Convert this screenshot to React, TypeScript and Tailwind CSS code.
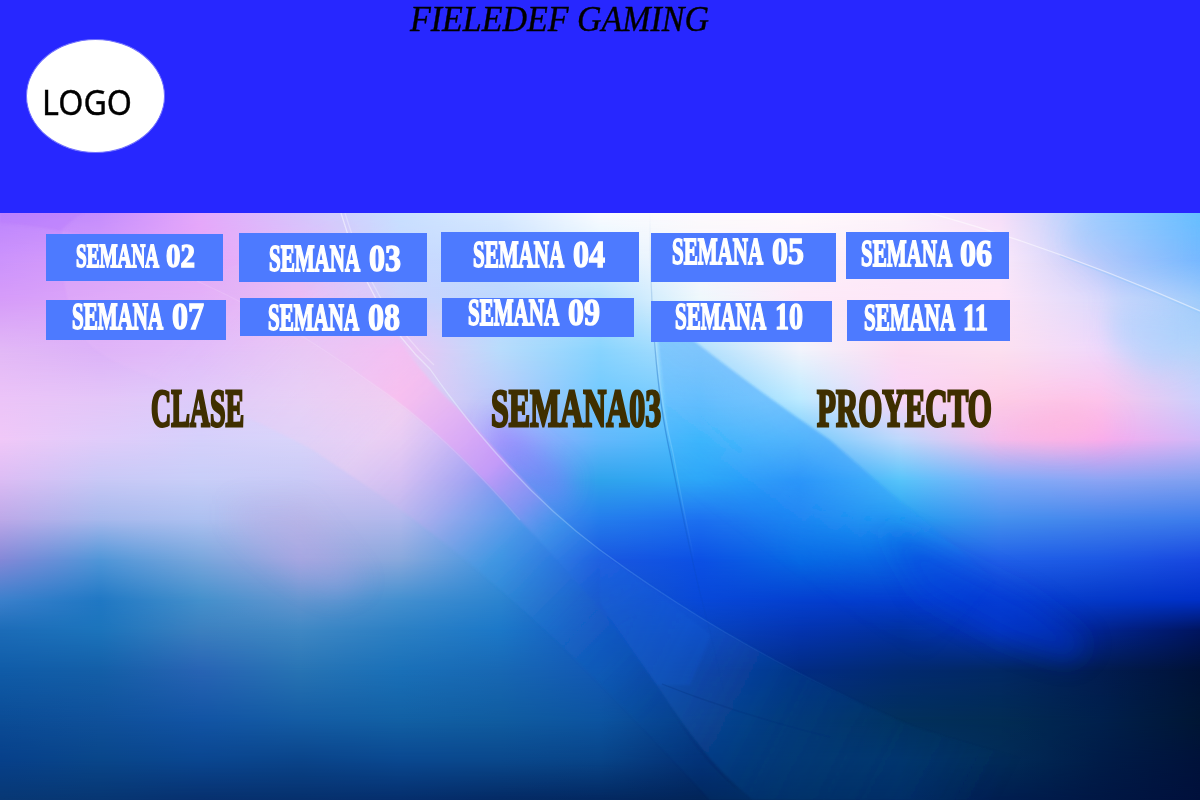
import { useLayoutEffect, useRef, useState } from "react";

// Text squeezed or stretched horizontally so that it fills a given width.
function FitText({ text, width, className }: { text: string; width: number; className: string }) {
  const ref = useRef<HTMLSpanElement>(null);
  const [scale, setScale] = useState(0.6);
  useLayoutEffect(() => {
    if (ref.current) setScale(width / ref.current.offsetWidth);
  }, [text, width]);
  return (
    <span
      ref={ref}
      className={`inline-block origin-left leading-none whitespace-nowrap ${className}`}
      style={{ transform: `scaleX(${scale})` }}
    >
      {text}
    </span>
  );
}

const display = "font-['Liberation_Serif',serif] font-bold";

const weeks = [
  [
    { word: "SEMANA", number: "02", wordWidth: "w-[90px]", fit: [83, 29], box: "ml-[46px] mt-[2px] w-[177px] h-[47px] pl-[30px] pt-[5px]", size: "text-[34px]" },
    { word: "SEMANA", number: "03", wordWidth: "w-[99.5px]", fit: [91, 32], box: "ml-[16px] mt-[1px] w-[188px] h-[49px] pl-[30px] pt-[7px]", size: "text-[37px]" },
    { word: "SEMANA", number: "04", wordWidth: "w-[99.5px]", fit: [91, 32], box: "ml-[14px] w-[198px] h-[50px] pl-[32px] pt-[4px]", size: "text-[37px]" },
    { word: "SEMANA", number: "05", wordWidth: "w-[99.5px]", fit: [91, 32], box: "ml-[12px] mt-[1px] w-[184.5px] h-[49px] pl-[21px]", size: "text-[37px]" },
    { word: "SEMANA", number: "06", wordWidth: "w-[99.5px]", fit: [91, 32], box: "ml-[10px] w-[163.5px] h-[47px] pl-[15px] pt-[3px]", size: "text-[37px]" },
  ],
  [
    { word: "SEMANA", number: "07", wordWidth: "w-[99.5px]", fit: [91, 32], box: "ml-[46px] mt-[2px] w-[180px] h-[40px] pl-[26px]", size: "text-[37px] -mt-[2px]" },
    { word: "SEMANA", number: "08", wordWidth: "w-[99.5px]", fit: [91, 32], box: "ml-[14px] w-[187px] h-[38px] pl-[28px]", size: "text-[37px] mt-[1px]" },
    { word: "SEMANA", number: "09", wordWidth: "w-[99.5px]", fit: [91, 32], box: "ml-[15px] w-[192px] h-[39px] pl-[26px]", size: "text-[37px] -mt-[4px]" },
    { word: "SEMANA", number: "10", wordWidth: "w-[99.5px]", fit: [91, 28], box: "ml-[17px] mt-[3px] w-[181px] h-[41px] pl-[24px]", size: "text-[37px] -mt-[3px]" },
    { word: "SEMANA", number: "11", wordWidth: "w-[99px]", fit: [91, 25], box: "ml-[14.5px] mt-[2px] w-[163.5px] h-[41px] pl-[17px]", size: "text-[37px] -mt-[1px]" },
  ],
];

// Colour mesh: one entry per row, thirteen colours at 100px steps.
const mesh: [number, string][] = [
  [0, "bd85fd c58dfd e5a8fb d6c4fc c9e0ff d8eaff fafcff fdfafd fffafc fdf3fb f6def9 a4d0ff 66c0ff"],
  [47, "cc93fc d69efa e6a6f8 e4bcfa c8d8ff c4dcff dcf2ff f8f6fc fdf0fa fce9f8 fbe8fa c4ccfb 78b8ff"],
  [87, "d69cf9 dca6f9 e0aef8 ecbcf4 ccd2fc bcd8ff b4e0fe eef8fc fdeaf8 fde6f7 fde4f7 dcdafc a0ccfb"],
  [137, "e2b8f6 dcb2f8 dfbbfa e6c8f6 f0c4f4 b8dcfc 88d4fe b0e0fd f2f4fc fcdcf2 fce0f0 f0d8fb b8d4fa"],
  [187, "ecc4f8 e4c6f8 dcccfa e3d3f8 eecef2 b8c8fa 70c8fe 78ccfe bceaff f8d4f8 fdcce6 fdc4ec ccd0fc"],
  [227, "f0c8f8 e0ccfa d5d0fb d8d4fa e6cef6 a8a4fc 64b8fc 48bcfc 70c8fc bcd8fc f4bcec f8acee d0b8f8"],
  [267, "dcbcf4 c8c8f6 c8cef8 c9caf6 d4c2f4 7c94f4 30a4ec 30a8f8 3098f8 58c4fa 80acf8 8ca4f4 80a0f0"],
  [307, "bca8e8 a6b8ec acc0f0 b8b8e8 b0b8ec 649cec 247cec 1c70f0 2084f0 209cf0 4490ee 4484ec 3c7cec"],
  [347, "8488d8 5096d8 78a6dc a0a6e0 88a8dc 4094e0 1a58e0 0c50e4 0868e4 0c60e0 2060e8 1c58e4 1848e0"],
  [387, "3c80cc 2078c4 4490cc 6496d0 4490d0 2c84d0 1858c8 0848d8 0440d0 0438cc 0840d0 0438c8 0030c8"],
  [417, "1c6cb8 1c74bc 3c80c0 4088c4 2c80c4 1c78c8 1458c0 0844c0 0434b0 0230a0 0434b8 022490 001560"],
  [457, "105ca8 145fa8 2864b4 2874b4 1a70b8 1868b4 1258b4 083ca0 022c84 022a70 022864 021c50 001238"],
  [507, "0b4c96 0f509a 1254a4 145ca4 1260a4 105ca0 0c54a0 063c88 043470 02305c 022c54 00204c 001634"],
  [547, "07408a 09468a 0a4690 0a448a 0a4890 0a488c 084488 043074 04346c 02346c 022c58 001c48 00123a"],
  [587, "083874 073672 07306e 06306c 052e6c 042a64 032860 022458 022c60 022c64 001e50 001744 00103c"],
];

function Background() {
  return (
    <svg viewBox="0 0 1200 587" className="col-start-1 row-start-1 block h-[587px] w-[1200px]">
      <defs>
        {mesh.map(([, colours], i) => (
          <linearGradient key={i} id={`row${i}`} gradientUnits="userSpaceOnUse" x1="0" x2="1200" y1="0" y2="0">
            {colours.split(" ").map((c, j) => (
              <stop key={j} offset={j / 12} stopColor={`#${c}`} />
            ))}
          </linearGradient>
        ))}
        {mesh.slice(1).map(([y], i) => (
          <g key={i}>
            <linearGradient id={`fade${i + 1}`} gradientUnits="userSpaceOnUse" x1="0" x2="0" y1={mesh[i][0]} y2={y}>
              <stop offset="0" stopColor="#fff" stopOpacity="0" />
              <stop offset="1" stopColor="#fff" />
            </linearGradient>
            <mask id={`mask${i + 1}`} maskUnits="userSpaceOnUse" x="0" y={mesh[i][0]} width="1200" height="587">
              <rect x="0" y={mesh[i][0]} width="1200" height="587" fill={`url(#fade${i + 1})`} />
            </mask>
          </g>
        ))}
        <linearGradient id="violet" gradientUnits="userSpaceOnUse" x1="330" y1="60" x2="640" y2="400">
          <stop offset="0" stopColor="#e8c8fc" stopOpacity=".1" />
          <stop offset=".3" stopColor="#fcb8ee" stopOpacity=".65" />
          <stop offset=".55" stopColor="#d49cf8" stopOpacity=".75" />
          <stop offset=".66" stopColor="#9494f4" stopOpacity=".6" />
          <stop offset=".74" stopColor="#44a0ec" stopOpacity=".4" />
          <stop offset=".88" stopColor="#2068e0" stopOpacity=".35" />
          <stop offset="1" stopColor="#1058d8" stopOpacity=".2" />
        </linearGradient>
        <linearGradient id="petal" gradientUnits="userSpaceOnUse" x1="200" y1="100" x2="640" y2="530">
          <stop offset="0" stopColor="#f0c4f8" stopOpacity=".15" />
          <stop offset=".35" stopColor="#f4d0f0" stopOpacity=".4" />
          <stop offset=".5" stopColor="#b8a8f0" stopOpacity=".35" />
          <stop offset=".62" stopColor="#409ce8" stopOpacity=".35" />
          <stop offset=".8" stopColor="#1c6cd8" stopOpacity=".2" />
          <stop offset="1" stopColor="#0c4ca8" stopOpacity=".1" />
        </linearGradient>
        <linearGradient id="cyan" gradientUnits="userSpaceOnUse" x1="880" y1="271" x2="805" y2="371">
          <stop offset="0" stopColor="#1c90fc" stopOpacity=".42" />
          <stop offset="1" stopColor="#1c90fc" stopOpacity="0" />
        </linearGradient>
        <linearGradient id="along" gradientUnits="userSpaceOnUse" x1="700" y1="130" x2="1040" y2="385">
          <stop offset="0" stopColor="#fff" stopOpacity=".8" />
          <stop offset=".4" stopColor="#fff" />
          <stop offset=".9" stopColor="#fff" stopOpacity="0" />
        </linearGradient>
        <mask id="alongMask" maskUnits="userSpaceOnUse" x="0" y="0" width="1200" height="587">
          <rect width="1200" height="587" fill="url(#along)" />
        </mask>
        <linearGradient id="wave" gradientUnits="userSpaceOnUse" x1="600" y1="330" x2="1020" y2="550">
          <stop offset="0" stopColor="#2c7cf0" stopOpacity=".05" />
          <stop offset=".25" stopColor="#2c74e0" stopOpacity=".22" />
          <stop offset=".5" stopColor="#044890" stopOpacity=".35" />
          <stop offset="1" stopColor="#043c6c" stopOpacity="0" />
        </linearGradient>
        <linearGradient id="streak" gradientUnits="userSpaceOnUse" x1="400" y1="80" x2="860" y2="500">
          <stop offset="0" stopColor="#fff" stopOpacity=".5" />
          <stop offset=".35" stopColor="#d8f4ff" stopOpacity=".4" />
          <stop offset=".6" stopColor="#88c8ff" stopOpacity=".2" />
          <stop offset="1" stopColor="#58a8f0" stopOpacity="0" />
        </linearGradient>
        <linearGradient id="spine" gradientUnits="userSpaceOnUse" x1="0" y1="0" x2="0" y2="480">
          <stop offset="0" stopColor="#0858b8" stopOpacity="0" />
          <stop offset=".4" stopColor="#0858b8" stopOpacity=".4" />
          <stop offset="1" stopColor="#0838a0" stopOpacity="0" />
        </linearGradient>
        <linearGradient id="spineLight" gradientUnits="userSpaceOnUse" x1="0" y1="0" x2="0" y2="350">
          <stop offset="0" stopColor="#fff" stopOpacity=".05" />
          <stop offset=".6" stopColor="#a0e0ff" stopOpacity=".35" />
          <stop offset="1" stopColor="#a0e0ff" stopOpacity="0" />
        </linearGradient>
        <filter id="soft" x="-20%" y="-20%" width="140%" height="140%">
          <feGaussianBlur stdDeviation="12" />
        </filter>
        <filter id="edge" x="-5%" y="-5%" width="110%" height="110%">
          <feGaussianBlur stdDeviation=".9" />
        </filter>
      </defs>

      {mesh.map(([y], i) => {
        const top = i === 0 ? 0 : mesh[i - 1][0];
        const bottom = i === mesh.length - 1 ? 587 : mesh[i + 1][0];
        return (
          <rect
            key={y}
            x="0"
            y={top}
            width="1200"
            height={bottom - top}
            fill={`url(#row${i})`}
            mask={i === 0 ? undefined : `url(#mask${i})`}
          />
        );
      })}

      <g filter="url(#soft)">
        <path d="M490 195 L572 264 L560 292 L500 250Z" fill="#8870fc" opacity=".38" />
        <path d="M880 310 L1030 385 L1090 430 L1070 450 L1010 430 L920 380Z" fill="#0438dc" opacity=".42" />
        <path d="M235 290 L300 290 L365 370 L335 385 Q280 360 235 310Z" fill="#b4a8e8" opacity=".25" />
        <path d="M1080 0 L1200 0 L1200 60 L1120 80 L1060 30Z" fill="#68b8ff" opacity=".2" />
        <path d="M1110 90 L1200 100 L1200 140 L1150 160 L1110 130Z" fill="#9cd0ff" opacity=".4" />
        <path d="M1000 212 Q1060 250 1115 212 L1070 190Z" fill="#ffb8d8" opacity=".5" />
      </g>

      <g filter="url(#edge)">
        <path d="M0 10 Q38 12 78 22 L62 17 Q74 4 84 0 L0 0Z" fill="#b070ff" opacity=".25" />
        <path
          d="M62 17 Q58 80 82 120 Q90 143 160 167 Q250 203 313 237 L383 284 Q463 340 555 426 Q650 520 710 587 L753 587 Q700 555 657 472 Q600 390 520 307 Q440 215 367 167 Q290 110 197 68 Q120 30 62 17Z"
          fill="url(#petal)"
        />
        <path
          d="M345 0 L370 70 Q400 145 463 200 Q540 290 600 338 L711 422 L690 472 L657 472 Q600 390 520 307 Q440 215 367 167 Q290 110 197 68 Q270 40 345 0Z"
          fill="url(#violet)"
        />
        <g mask="url(#alongMask)">
          <path d="M657 120 L684 120 Q760 180 830 227 L887 277 L956 334 L1060 424 L1060 480 L720 472 L700 380 L670 233Z" fill="url(#cyan)" />
        </g>
        <path d="M600 338 Q750 445 914 514 Q1040 555 1200 580 L1200 587 L753 587 Q710 555 657 472 L600 390Z" fill="url(#wave)" />
      </g>

      <g fill="none" strokeWidth="1.3">
        <path d="M341 0 Q370 100 430 156 Q510 270 600 337 Q740 440 914 514" stroke="url(#streak)" />
        <path d="M345 0 Q374 98 434 152" stroke="#fff" opacity=".3" />
        <path d="M652 0 Q650 150 673 240 Q689 328 702 378" stroke="url(#spineLight)" />
        <path d="M650 0 Q650 150 670 240 Q688 330 700 380 Q716 440 726 490" stroke="url(#spine)" />
        <path d="M930 0 Q1060 36 1200 98" stroke="#fff" opacity=".5" />
        <path d="M1060 43 Q1130 69 1200 100" stroke="#8cc8ff" opacity=".35" />
        <path d="M197 68 Q290 110 367 167 Q440 215 520 307" stroke="#fff" opacity=".12" />
        <path d="M662 471 Q740 502 830 524" stroke="#022c78" opacity=".25" />
      </g>
    </svg>
  );
}

export default function App() {
  return (
    <div className="h-[800px] w-[1200px] overflow-hidden">
      <header className="flex h-[213px] items-start bg-[#2727ff]">
        <div className="mt-[39px] ml-[26px] flex h-[114px] w-[139px] items-start rounded-[50%] border border-[#7070ff] bg-white pt-[45px] pl-[15px]">
          <FitText text="LOGO" width={90} className="font-['Noto_Sans',sans-serif] text-[34px] text-black [-webkit-text-stroke:0.4px_black]" />
        </div>
        <h1 className="mt-[1px] ml-[245px] flex">
          <FitText
            text="FIELEDEF GAMING"
            width={299}
            className="font-['Liberation_Serif',serif] text-[36px] text-black italic [-webkit-text-stroke:0.4px_black]"
          />
        </h1>
      </header>
      <main className="grid grid-cols-1 grid-rows-1">
        <Background />
        <div className="relative col-start-1 row-start-1 h-[587px] w-[1200px] pt-[19px]">
          {weeks.map((row, i) => (
            <nav key={i} className={i === 0 ? "flex h-[66px] items-start" : "flex h-[88px] items-start"}>
              {row.map((w) => (
                <a key={w.number} className={`flex shrink-0 items-start bg-[#4d7aff] ${w.box}`}>
                  <span className={`flex shrink-0 ${w.wordWidth}`}>
                    <FitText
                      text={w.word}
                      width={w.fit[0]}
                      className={`${display} ${w.size} text-white [-webkit-text-stroke:1.8px_white]`}
                    />
                  </span>
                  <FitText
                    text={w.number}
                    width={w.fit[1]}
                    className={`${display} ${w.size} text-white [-webkit-text-stroke:1.4px_white]`}
                  />
                </a>
              ))}
            </nav>
          ))}
          <div className="-mt-[3px] flex h-[56px] items-start text-[#3f2f00]">
            <h2 className="ml-[151px] flex w-[340px]">
              <FitText text="CLASE" width={93} className={`${display} text-[52px] [-webkit-text-stroke:2.8px_#3f2f00]`} />
            </h2>
            <h2 className="flex w-[326px]">
              <FitText text="SEMANA03" width={170} className={`${display} text-[52px] [-webkit-text-stroke:2.8px_#3f2f00]`} />
            </h2>
            <h2 className="flex">
              <FitText text="PROYECTO" width={175} className={`${display} text-[52px] [-webkit-text-stroke:2.8px_#3f2f00]`} />
            </h2>
          </div>
        </div>
      </main>
    </div>
  );
}
